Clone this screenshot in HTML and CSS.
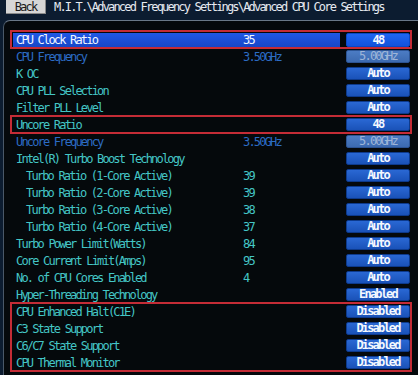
FILE: index.html
```html
<!DOCTYPE html>
<html>
<head>
<meta charset="utf-8">
<link rel="stylesheet" href="styles.css">
</head>
<body>
<div class="header">
  <span class="back">Back</span>
  <span class="crumb">M.I.T.\Advanced Frequency Settings\Advanced CPU Core Settings</span>
</div>
<div class="panel">
  <div class="list">
    <div class="frame">
      <div class="row selected"><span class="label">CPU Clock Ratio</span><span class="value">35</span><span class="btn hot">48</span></div>
    </div>
    <div class="row dim"><span class="label">CPU Frequency</span><span class="value">3.50GHz</span><span class="btn off">5.00GHz</span></div>
    <div class="row"><span class="label">K OC</span><span class="value"></span><span class="btn">Auto</span></div>
    <div class="row"><span class="label">CPU PLL Selection</span><span class="value"></span><span class="btn">Auto</span></div>
    <div class="row"><span class="label">Filter PLL Level</span><span class="value"></span><span class="btn">Auto</span></div>
    <div class="frame">
      <div class="row"><span class="label">Uncore Ratio</span><span class="value"></span><span class="btn">48</span></div>
    </div>
    <div class="row dim"><span class="label">Uncore Frequency</span><span class="value">3.50GHz</span><span class="btn off">5.00GHz</span></div>
    <div class="row"><span class="label">Intel(R) Turbo Boost Technology</span><span class="value"></span><span class="btn">Auto</span></div>
    <div class="row sub"><span class="label">Turbo Ratio (1-Core Active)</span><span class="value">39</span><span class="btn">Auto</span></div>
    <div class="row sub"><span class="label">Turbo Ratio (2-Core Active)</span><span class="value">39</span><span class="btn">Auto</span></div>
    <div class="row sub"><span class="label">Turbo Ratio (3-Core Active)</span><span class="value">38</span><span class="btn">Auto</span></div>
    <div class="row sub"><span class="label">Turbo Ratio (4-Core Active)</span><span class="value">37</span><span class="btn">Auto</span></div>
    <div class="row"><span class="label">Turbo Power Limit(Watts)</span><span class="value">84</span><span class="btn">Auto</span></div>
    <div class="row"><span class="label">Core Current Limit(Amps)</span><span class="value">95</span><span class="btn">Auto</span></div>
    <div class="row"><span class="label">No. of CPU Cores Enabled</span><span class="value">4</span><span class="btn">Auto</span></div>
    <div class="row"><span class="label">Hyper-Threading Technology</span><span class="value"></span><span class="btn">Enabled</span></div>
    <div class="frame">
      <div class="row"><span class="label">CPU Enhanced Halt(C1E)</span><span class="value"></span><span class="btn">Disabled</span></div>
      <div class="row"><span class="label">C3 State Support</span><span class="value"></span><span class="btn">Disabled</span></div>
      <div class="row"><span class="label">C6/C7 State Support</span><span class="value"></span><span class="btn">Disabled</span></div>
      <div class="row"><span class="label">CPU Thermal Monitor</span><span class="value"></span><span class="btn">Disabled</span></div>
    </div>
  </div>
</div>
</body>
</html>
```
FILE: styles.css
```css
html, body {
  margin: 0;
  padding: 0;
  background: #0c1c30;
  height: 375px;
  overflow: hidden;
}
body {
  font-family: "DejaVu Sans Mono", "Liberation Mono", monospace;
  font-size: 12px;
  letter-spacing: -1.82px;
}
.header {
  height: 20px;
  display: flex;
  align-items: flex-start;
}
.back {
  margin-left: 6px;
  width: 40px;
  height: 14px;
  box-sizing: border-box;
  background: #d6d6d6;
  border-right: 1px solid #8a8a8a;
  border-bottom: 1px solid #8a8a8a;
  color: #1a1a1a;
  text-align: center;
  line-height: 14px;
}
.crumb {
  margin-left: 8px;
  color: #e6eaf0;
  line-height: 14px;
}
.panel {
  margin-left: 3px;
  height: 355px;
  box-sizing: border-box;
  border-top: 1px solid #6a7888;
  border-left: 1px solid #4a5868;
  border-top-left-radius: 7px;
  background: #05090c;
  padding-top: 10px;
}
.list {
  margin-left: 6px;
  width: 402px;
}
.frame {
  position: relative;
}
.frame::after {
  content: "";
  position: absolute;
  left: 0;
  right: 0;
  top: -1px;
  bottom: -1px;
  border: 2px solid #c42c36;
  pointer-events: none;
}
.row {
  height: 17px;
  display: grid;
  grid-template-columns: 227px 103px 64px;
  padding: 0 2px 0 6px;
  align-items: center;
  color: #44c6c6;
}
.label, .value {
  white-space: nowrap;
  line-height: 14px;
}
.sub .label {
  padding-left: 10px;
}
.dim {
  color: #2c6cc4;
}
.selected .label,
.selected .value {
  align-self: start;
  margin-top: 2px;
  height: 14px;
  background: linear-gradient(#2058e6, #1646c8);
  color: #f2f6ff;
}
.selected .label {
  margin-left: -3px;
  padding-left: 3px;
}
.selected .value {
  margin-right: 6px;
}
.btn {
  align-self: start;
  margin-top: 2px;
  height: 13px;
  box-sizing: border-box;
  background: linear-gradient(#2a68d4, #1a52b8);
  border: 1px solid #0d3a8c;
  border-radius: 2px;
  color: #f4f8ff;
  font-weight: bold;
  text-align: center;
  line-height: 11px;
}
.btn.hot {
  height: 14px;
  background: linear-gradient(#1f66f2, #1252dc);
  border-color: #0a48c8;
  line-height: 12px;
}
.btn.off {
  background: linear-gradient(#4c7cc4, #3c6ab0);
  border-color: #2c5494;
  color: #9fb6d8;
  font-weight: normal;
}
```
